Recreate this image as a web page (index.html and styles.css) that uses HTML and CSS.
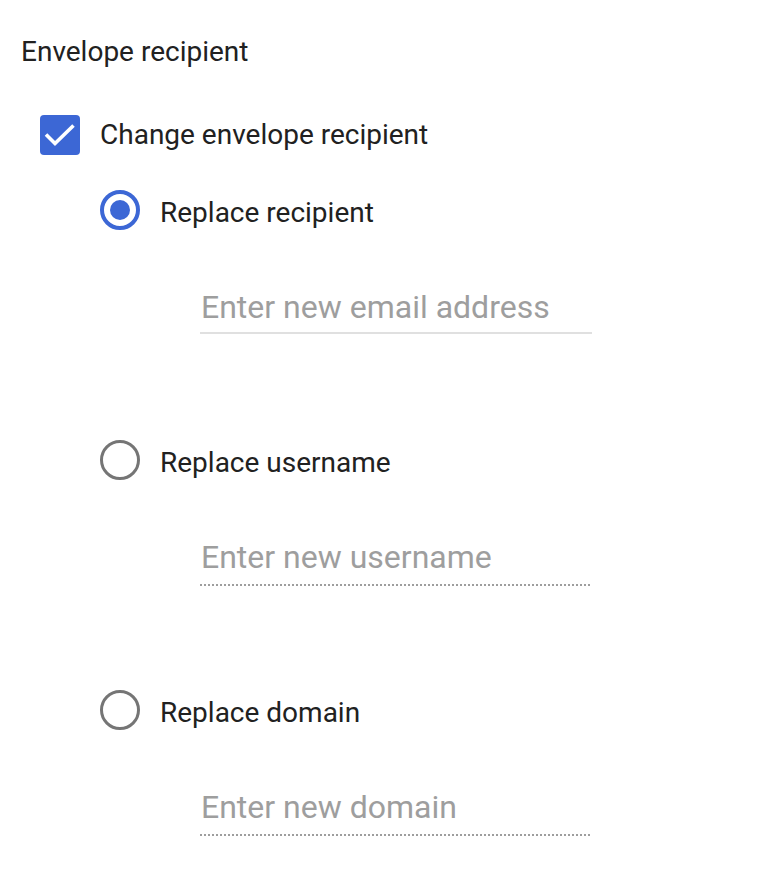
FILE: index.html
```html
<!DOCTYPE html>
<html lang="en">
<head>
<meta charset="utf-8">
<title>Envelope recipient</title>
<link rel="stylesheet" href="styles.css">
</head>
<body>
<div class="panel">
  <div class="title">Envelope recipient</div>
  <div class="check-row">
    <span class="checkbox">
      <svg viewBox="0 0 40 40" width="40" height="40"><path d="M6 19.5 L15 28.5 L33.5 10.5" fill="none" stroke="#fff" stroke-width="3.6"/></svg>
    </span>
    <span class="label">Change envelope recipient</span>
  </div>
  <div class="options">
    <div class="group">
      <div class="radio-row">
        <span class="radio checked"></span>
        <span class="label">Replace recipient</span>
      </div>
      <div class="field active">
        <input class="text-input" type="text" placeholder="Enter new email address">
      </div>
    </div>
    <div class="group">
      <div class="radio-row">
        <span class="radio"></span>
        <span class="label">Replace username</span>
      </div>
      <div class="field disabled">
        <input class="text-input" type="text" placeholder="Enter new username" disabled>
      </div>
    </div>
    <div class="group">
      <div class="radio-row">
        <span class="radio"></span>
        <span class="label">Replace domain</span>
      </div>
      <div class="field disabled">
        <input class="text-input" type="text" placeholder="Enter new domain" disabled>
      </div>
    </div>
  </div>
</div>
</body>
</html>
```

FILE: styles.css
```css
html, body {
  margin: 0;
  padding: 0;
  background: #ffffff;
}

body {
  font-family: Roboto, "Noto Sans", "Liberation Sans", sans-serif;
  color: #212121;
}

.panel {
  padding: 36px 0 0 21px;
}

.title {
  font-size: 28px;
  line-height: 32px;
  height: 32px;
}

.check-row {
  display: flex;
  align-items: flex-start;
  gap: 20px;
  margin: 47px 0 0 19px;
  height: 40px;
}

.checkbox {
  width: 40px;
  height: 40px;
  border-radius: 4px;
  background: #3c67d5;
  display: block;
  flex: none;
}

.checkbox svg {
  display: block;
}

.label {
  font-size: 28px;
  line-height: 32px;
}

.check-row .label {
  margin-top: 3.5px;
}

.radio-row .label {
  margin-top: 7px;
}

.options {
  display: flex;
  flex-direction: column;
  gap: 104px;
  margin: 35px 0 0 79px;
}

.radio-row {
  display: flex;
  align-items: flex-start;
  gap: 20px;
  height: 40px;
}

.radio {
  box-sizing: border-box;
  width: 40px;
  height: 40px;
  border-radius: 50%;
  border: 3.5px solid #757575;
  flex: none;
  position: relative;
}

.radio.checked {
  border: 4px solid #3c67d5;
}

.radio.checked::after {
  content: "";
  position: absolute;
  left: 50%;
  top: 50%;
  width: 20px;
  height: 20px;
  margin: -10px 0 0 -10px;
  border-radius: 50%;
  background: #3c67d5;
}

.field {
  margin: 58px 0 0 100px;
  width: 392px;
}

.field.active {
  padding-bottom: 6px;
  border-bottom: 2px solid #e0e0e0;
  margin-bottom: 2px;
}

.field.disabled {
  padding-bottom: 10px;
  background-image: linear-gradient(to right, #9e9e9e 0, #9e9e9e 50%, transparent 50%);
  background-size: 4px 2px;
  background-repeat: repeat-x;
  background-position: 0 bottom;
}

.text-input {
  display: block;
  width: 100%;
  box-sizing: border-box;
  height: 38px;
  margin: 0;
  padding: 0 0 0 1px;
  border: none;
  outline: none;
  background: transparent;
  font-family: Roboto, "Noto Sans", "Liberation Sans", sans-serif;
  font-size: 32px;
  line-height: 38px;
  color: #212121;
}

.text-input::placeholder {
  color: #9e9e9e;
  opacity: 1;
}
```
